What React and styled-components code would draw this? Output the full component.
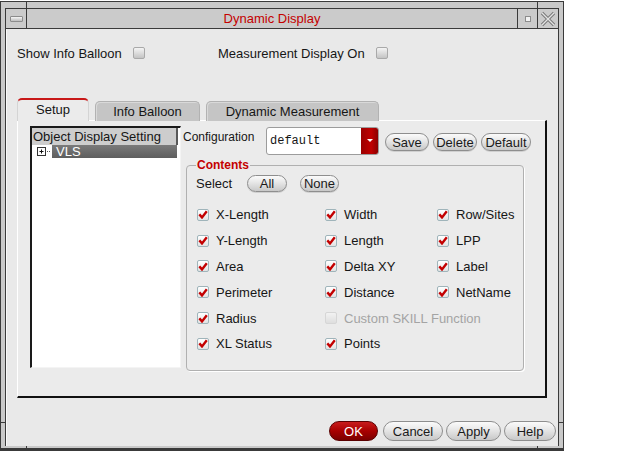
import React from "react";
import styled, { createGlobalStyle } from "styled-components";

const GlobalStyle = createGlobalStyle`
  html, body {
    margin: 0;
    padding: 0;
    background: #ffffff;
  }
  body {
    font-family: "Liberation Sans", Arial, sans-serif;
    font-size: 13px;
    color: #161616;
  }
`;

const columns = [
  ["X-Length", "Y-Length", "Area", "Perimeter", "Radius", "XL Status"],
  ["Width", "Length", "Delta XY", "Distance", null, "Points"],
  ["Row/Sites", "LPP", "Label", "NetName", null, null],
];

const CheckMark = () => (
  <svg width="10" height="9" viewBox="0 0 10 9">
    <path d="M1.3 4.4 L4 7.4 L8.8 1.2" fill="none" stroke="#c30000" strokeWidth="2.4" />
  </svg>
);

const CheckBox = ({ checked, disabled }) => (
  <Box $checked={checked} $disabled={disabled}>
    {checked && <CheckMark />}
  </Box>
);

const ExpandIcon = () => (
  <svg width="13" height="9" viewBox="0 0 13 9">
    <rect x="0.5" y="0.5" width="8" height="8" fill="#fff" stroke="#333" />
    <path d="M2.5 4.5 H6.5 M4.5 2.5 V6.5" stroke="#111" />
    <path d="M10 4.5 H11 M12 4.5 H13" stroke="#555" />
  </svg>
);

const CloseGlyph = () => (
  <svg width="16" height="16" viewBox="0 0 16 16">
    <path d="M2 2 L14 14 M14 2 L2 14" stroke="#7a7a7a" strokeWidth="3.2" />
    <path d="M2 2 L14 14 M14 2 L2 14" stroke="#e4e4e4" strokeWidth="1.3" />
  </svg>
);

export default function App() {
  return (
    <>
      <GlobalStyle />
      <Window>
        <Notch $side="top" style={{ left: 25 }} />
        <Notch $side="top" style={{ left: 536 }} />
        <Notch $side="left" style={{ top: 420 }} />
        <Notch $side="right" style={{ top: 420 }} />
        <Notch $side="bottom" style={{ left: 25 }} />
        <Notch $side="bottom" style={{ left: 536 }} />
        <Inner>
          <TitleBar>
            <MenuButton>
              <MenuBar />
            </MenuButton>
            <Title>Dynamic Display</Title>
            <MinButton>
              <MinDot />
            </MinButton>
            <CloseButton>
              <CloseGlyph />
            </CloseButton>
          </TitleBar>
          <Body>
            <TopRow>
              <TopOption $width={201}>
                Show Info Balloon
                <CheckBox />
              </TopOption>
              <TopOption>
                Measurement Display On
                <CheckBox />
              </TopOption>
            </TopRow>

            <TabBar>
              <Tab $active $width={72}>Setup</Tab>
              <Tab $width={105}>Info Balloon</Tab>
              <Tab $width={173}>Dynamic Measurement</Tab>
            </TabBar>

            <Panel>
              <Tree>
                <TreeHeader>Object Display Setting</TreeHeader>
                <TreeRow>
                  <ExpandIcon />
                  <TreeSelected>VLS</TreeSelected>
                </TreeRow>
              </Tree>

              <Settings>
                <ConfigRow>
                  <ConfigLabel>Configuration</ConfigLabel>
                  <Combo>
                    <ComboText>default</ComboText>
                    <ComboArrow>
                      <ArrowMark />
                    </ComboArrow>
                  </Combo>
                  <ConfigButtons>
                    <PillButton $width={44}>Save</PillButton>
                    <PillButton $width={44}>Delete</PillButton>
                    <PillButton $width={50}>Default</PillButton>
                  </ConfigButtons>
                </ConfigRow>

                <Group>
                  <Legend>Contents</Legend>
                  <SelectRow>
                    <SelectLabel>Select</SelectLabel>
                    <PillButton $width={40} $height={17}>All</PillButton>
                    <PillButton $width={39} $height={17} $gap={13}>None</PillButton>
                  </SelectRow>
                  <OptionGrid>
                    {columns.map((col, ci) =>
                      col.map((label, ri) =>
                        label ? (
                          <Option key={`${ci}-${ri}`} style={{ gridColumn: ci + 1, gridRow: ri + 1 }}>
                            <CheckBox checked />
                            {label}
                          </Option>
                        ) : null
                      )
                    )}
                    <Option $disabled style={{ gridColumn: "2 / span 2", gridRow: 5 }}>
                      <CheckBox disabled />
                      Custom SKILL Function
                    </Option>
                  </OptionGrid>
                </Group>
              </Settings>
            </Panel>

            <ButtonRow>
              <DialogButton $primary $width={49}>OK</DialogButton>
              <DialogButton $width={60}>Cancel</DialogButton>
              <DialogButton $width={55}>Apply</DialogButton>
              <DialogButton $width={52}>Help</DialogButton>
            </ButtonRow>
          </Body>
        </Inner>
      </Window>
    </>
  );
}

const Window = styled.div`
  position: relative;
  box-sizing: border-box;
  width: 564px;
  height: 450px;
  margin-top: 1px;
  padding: 6px 4px 2px 4px;
  background: #c9c9c9;
  border: 1px solid #3a3a3a;
  border-bottom-width: 3px;
  display: flex;
`;

const Notch = styled.span`
  position: absolute;
  background: #3a3a3a;
  ${(p) => p.$side === "top" && "top: -1px; width: 1px; height: 7px;"}
  ${(p) => p.$side === "bottom" && "bottom: -3px; width: 1px; height: 5px;"}
  ${(p) => p.$side === "left" && "left: 0; width: 5px; height: 1px;"}
  ${(p) => p.$side === "right" && "right: 0; width: 5px; height: 1px;"}
`;

const Inner = styled.div`
  flex: 1;
  display: flex;
  flex-direction: column;
  border: 1px solid #3a3a3a;
  border-bottom: none;
`;

const TitleBar = styled.div`
  height: 20px;
  box-sizing: border-box;
  display: flex;
  background: #cbcbcb;
  border-bottom: 1px solid #3a3a3a;
`;

const MenuButton = styled.div`
  width: 21px;
  box-sizing: border-box;
  border-right: 1px solid #3a3a3a;
  display: flex;
  align-items: center;
  justify-content: center;
`;

const MenuBar = styled.span`
  width: 11px;
  height: 4px;
  background: linear-gradient(#f6f6f6, #bdbdbd);
  border: 1px solid #8c8c8c;
  border-radius: 1px;
`;

const Title = styled.div`
  flex: 1;
  text-align: center;
  line-height: 19px;
  font-size: 13px;
  color: #c40000;
`;

const MinButton = styled.div`
  width: 20px;
  box-sizing: border-box;
  border-left: 1px solid #3a3a3a;
  display: flex;
  align-items: center;
  justify-content: center;
`;

const MinDot = styled.span`
  width: 4px;
  height: 4px;
  background: #f2f2f2;
  border: 1px solid #8c8c8c;
`;

const CloseButton = styled(MinButton)`
  width: 21px;
`;

const Body = styled.div`
  flex: 1;
  display: flex;
  flex-direction: column;
  padding: 0 2px 0 11px;
  background: #e9e9e9;
  box-shadow: inset 1px 0 0 #fafafa;
`;

const TopRow = styled.div`
  display: flex;
  align-items: center;
  height: 16px;
  margin-top: 16px;
`;

const TopOption = styled.label`
  display: flex;
  align-items: center;
  gap: 11px;
  width: ${(p) => (p.$width ? `${p.$width}px` : "auto")};
`;

const Box = styled.span`
  flex: none;
  width: 12px;
  height: 12px;
  box-sizing: border-box;
  border: 1px solid ${(p) => (p.$disabled ? "#d6d6d6" : p.$checked ? "#9fb4ba" : "#a9a9a9")};
  border-radius: 2px;
  background: ${(p) =>
    p.$disabled
      ? "linear-gradient(#f2f2f2, #dedede)"
      : p.$checked
      ? "linear-gradient(#ffffff, #e2e2e2)"
      : "linear-gradient(#f4f4f4, #c4c4c4)"};
  display: flex;
  align-items: center;
  justify-content: center;
`;

const TabBar = styled.div`
  display: flex;
  align-items: flex-end;
  gap: 6px;
  height: 22px;
  margin-top: 38px;
  margin-bottom: -1px;
  position: relative;
  z-index: 1;
`;

const Tab = styled.div`
  box-sizing: border-box;
  width: ${(p) => p.$width}px;
  height: ${(p) => (p.$active ? 23 : 20)}px;
  padding-top: ${(p) => (p.$active ? 1 : 1)}px;
  text-align: center;
  line-height: 17px;
  border-radius: 5px 5px 0 0;
  background: ${(p) => (p.$active ? "#ebebeb" : "#c5c5c5")};
  border: 1px solid ${(p) => (p.$active ? "#d4d4d4" : "#b2b2b2")};
  border-top: ${(p) => (p.$active ? "2px solid #c81818" : "1px solid #b2b2b2")};
  border-bottom: none;
  box-shadow: ${(p) => (p.$active ? "none" : "inset 1px 1px 0 #d9d9d9")};
`;

const Panel = styled.div`
  box-sizing: border-box;
  width: 530px;
  height: 278px;
  display: flex;
  align-items: flex-start;
  padding: 5px 0 0 12px;
  background: #ebebeb;
  border-top: 1px solid #ffffff;
  border-left: 1px solid #ffffff;
  border-right: 2px solid #111111;
  border-bottom: 2px solid #111111;
`;

const Tree = styled.div`
  box-sizing: border-box;
  width: 151px;
  height: 242px;
  background: #ffffff;
  border-top: 2px solid #1a1a1a;
  border-left: 2px solid #1a1a1a;
  border-right: 1px solid #f4f4f4;
  border-bottom: 1px solid #f4f4f4;
`;

const TreeHeader = styled.div`
  box-sizing: border-box;
  width: 146px;
  height: 17px;
  line-height: 17px;
  padding-left: 1px;
  background: #cdcdcd;
  border-right: 2px solid #5a5a5a;
  white-space: nowrap;
  overflow: hidden;
`;

const TreeRow = styled.div`
  display: flex;
  align-items: center;
  height: 13px;
  padding-left: 5px;
  gap: 2px;
`;

const TreeSelected = styled.div`
  width: 125px;
  height: 13px;
  line-height: 13px;
  padding-left: 4px;
  box-sizing: border-box;
  color: #ffffff;
  background: linear-gradient(#7a7a7a, #5e5e5e);
`;

const Settings = styled.div`
  display: flex;
  flex-direction: column;
  margin-left: 2px;
`;

const ConfigRow = styled.div`
  display: flex;
  align-items: flex-start;
  height: 28px;
  margin-top: 1px;
`;

const ConfigLabel = styled.div`
  width: 83px;
  font-size: 12px;
  line-height: 14px;
  margin-top: 3px;
`;

const Combo = styled.div`
  box-sizing: border-box;
  width: 113px;
  height: 28px;
  display: flex;
  background: #ffffff;
  border: 1px solid #9c9c9c;
  border-radius: 3px;
`;

const ComboText = styled.div`
  flex: 1;
  padding-left: 3px;
  line-height: 26px;
  font-family: "Liberation Mono", "Courier New", monospace;
  font-size: 12px;
`;

const ComboArrow = styled.div`
  width: 17px;
  display: flex;
  align-items: center;
  justify-content: center;
  background: linear-gradient(90deg, #9a0000, #c00000 60%, #8a0000);
  border-radius: 0 2px 2px 0;
`;

const ArrowMark = styled.span`
  width: 0;
  height: 0;
  margin-top: -2px;
  border-left: 3px solid transparent;
  border-right: 3px solid transparent;
  border-top: 3px solid #ffffff;
`;

const ConfigButtons = styled.div`
  display: flex;
  gap: 4px;
  margin: 6px 0 0 6px;
`;

const PillButton = styled.div`
  box-sizing: border-box;
  width: ${(p) => p.$width}px;
  height: ${(p) => p.$height || 18}px;
  margin-left: ${(p) => p.$gap || 0}px;
  display: flex;
  align-items: center;
  justify-content: center;
  font-size: 13px;
  color: #1a1a1a;
  background: linear-gradient(#fbfbfb, #e6e6e6 45%, #c8c8c8);
  border: 1px solid #8e8e8e;
  border-radius: 9px;
  box-shadow: 0 1px 0 #d0d0d0;
`;

const Group = styled.fieldset`
  box-sizing: border-box;
  width: 338px;
  height: 213px;
  margin: 3px 0 0 3px;
  padding: 0 0 0 9px;
  border: 1px solid #b0b0b0;
  border-radius: 4px;
  box-shadow: 1px 1px 0 #ffffff;
  min-inline-size: auto;
`;

const Legend = styled.legend`
  padding: 0 1px;
  font-size: 12px;
  font-weight: bold;
  line-height: 14px;
  color: #c40000;
`;

const SelectRow = styled.div`
  display: flex;
  align-items: center;
  height: 17px;
  margin-top: 3px;
`;

const SelectLabel = styled.span`
  width: 51px;
`;

const OptionGrid = styled.div`
  display: grid;
  grid-template-columns: 128px 112px auto;
  grid-auto-rows: 25.8px;
  margin: 10px 0 0 1px;
`;

const Option = styled.label`
  display: flex;
  align-items: center;
  gap: 7px;
  white-space: nowrap;
  color: ${(p) => (p.$disabled ? "#a4a4a4" : "#161616")};
`;

const ButtonRow = styled.div`
  display: flex;
  justify-content: flex-end;
  gap: 3px;
  margin-top: 23px;
`;

const DialogButton = styled.div`
  box-sizing: border-box;
  width: ${(p) => p.$width}px;
  height: 20px;
  display: flex;
  align-items: center;
  justify-content: center;
  font-size: 13px;
  color: ${(p) => (p.$primary ? "#ffffff" : "#1a1a1a")};
  background: ${(p) =>
    p.$primary
      ? "linear-gradient(#c81c1c, #a80000 50%, #7a0000)"
      : "linear-gradient(#fbfbfb, #e6e6e6 45%, #c8c8c8)"};
  border: 1px solid ${(p) => (p.$primary ? "#5a0000" : "#8e8e8e")};
  border-radius: 10px;
  margin-right: ${(p) => (p.$primary ? 2 : 0)}px;
`;
